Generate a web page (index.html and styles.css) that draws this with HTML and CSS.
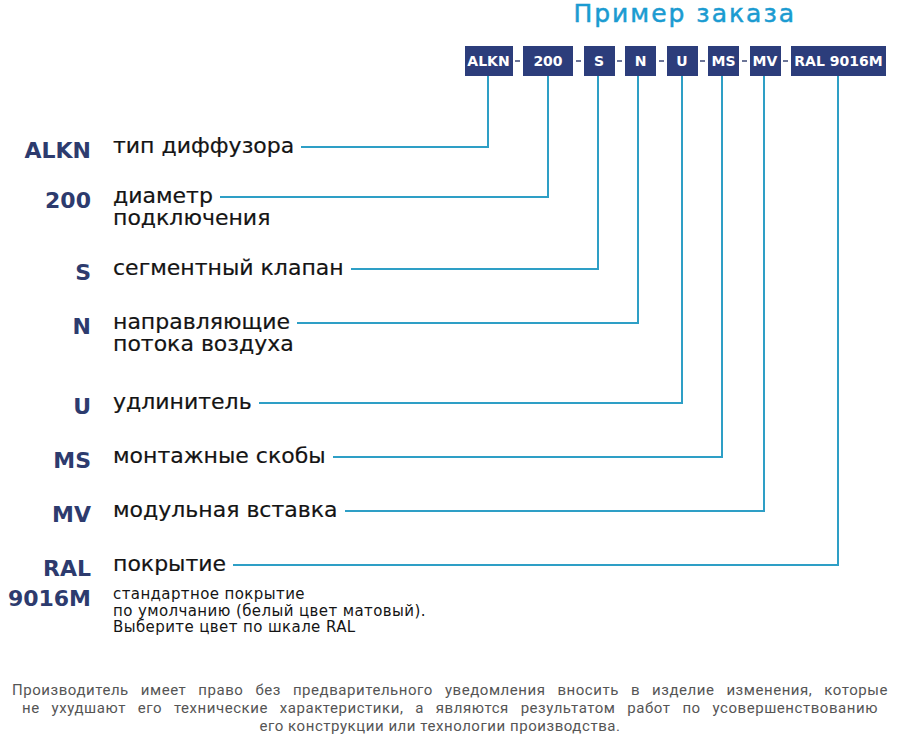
FILE: index.html
```html
<!DOCTYPE html>
<html lang="ru">
<head>
<meta charset="utf-8">
<title>Пример заказа</title>
<link rel="stylesheet" href="styles.css">
</head>
<body>
<div class="page">
  <header class="order">
    <h1 class="title">Пример заказа</h1>
    <div class="codes">
      <span class="code-box w48">ALKN</span><span class="dash"></span>
      <span class="code-box w50">200</span><span class="dash"></span>
      <span class="code-box">S</span><span class="dash"></span>
      <span class="code-box">N</span><span class="dash"></span>
      <span class="code-box">U</span><span class="dash"></span>
      <span class="code-box">MS</span><span class="dash"></span>
      <span class="code-box">MV</span><span class="dash"></span>
      <span class="code-box w95">RAL 9016M</span>
    </div>
  </header>

  <section class="legend">
    <div class="row">
      <div class="key">ALKN</div>
      <div class="desc" style="width:376px">
        <div class="lead"><span>тип диффузора</span><span class="wire"></span></div>
      </div>
    </div>
    <div class="row near">
      <div class="key">200</div>
      <div class="desc" style="width:436px">
        <div class="lead"><span>диаметр</span><span class="wire"></span></div>
        <div class="second">подключения</div>
      </div>
    </div>
    <div class="row near">
      <div class="key">S</div>
      <div class="desc" style="width:486px">
        <div class="lead"><span>сегментный клапан</span><span class="wire"></span></div>
      </div>
    </div>
    <div class="row">
      <div class="key">N</div>
      <div class="desc" style="width:526px">
        <div class="lead"><span>направляющие</span><span class="wire"></span></div>
        <div class="second">потока воздуха</div>
      </div>
    </div>
    <div class="row far">
      <div class="key">U</div>
      <div class="desc" style="width:570px">
        <div class="lead"><span>удлинитель</span><span class="wire"></span></div>
      </div>
    </div>
    <div class="row">
      <div class="key">MS</div>
      <div class="desc" style="width:610px">
        <div class="lead"><span>монтажные скобы</span><span class="wire"></span></div>
      </div>
    </div>
    <div class="row">
      <div class="key">MV</div>
      <div class="desc" style="width:652px">
        <div class="lead"><span>модульная вставка</span><span class="wire"></span></div>
      </div>
    </div>
    <div class="row">
      <div class="key">RAL<br>9016M</div>
      <div class="desc" style="width:726px">
        <div class="lead"><span>покрытие</span><span class="wire"></span></div>
        <div class="note">стандартное покрытие<br>по умолчанию (белый цвет матовый).<br>Выберите цвет по шкале RAL</div>
      </div>
    </div>
  </section>

  <footer class="disclaimer">
    <p class="just">Производитель имеет право без предварительного уведомления вносить в изделие изменения, которые</p>
    <p class="just inset">не ухудшают  его технические  характеристики, а являются результатом работ по усовершенствованию</p>
    <p class="center">его конструкции или технологии производства.</p>
  </footer>

  <svg class="links" width="900" height="744" viewBox="0 0 900 744" aria-hidden="true">
    <g stroke="#2e9fc6" stroke-width="2" fill="none">
      <line x1="488" y1="76" x2="488" y2="148"/>
      <line x1="548" y1="76" x2="548" y2="198"/>
      <line x1="598" y1="76" x2="598" y2="270"/>
      <line x1="638" y1="76" x2="638" y2="324"/>
      <line x1="682" y1="76" x2="682" y2="404"/>
      <line x1="722" y1="76" x2="722" y2="458"/>
      <line x1="764" y1="76" x2="764" y2="512"/>
      <line x1="838" y1="76" x2="838" y2="566"/>
    </g>
  </svg>
</div>
</body>
</html>
```

FILE: styles.css
```css
body {
  margin: 0;
  background: #ffffff;
  font-family: "DejaVu Sans", "Noto Sans", sans-serif;
  color: #141414;
}

.page {
  position: relative;
  width: 900px;
  height: 744px;
  overflow: hidden;
}

.order {
  display: flex;
  flex-direction: column;
  align-items: flex-end;
  padding-right: 14px;
}

.title {
  margin: 0 90px 0 0;
  font-size: 25px;
  line-height: 28px;
  font-weight: normal;
  letter-spacing: 2px;
  color: #1b9bd1;
  -webkit-text-stroke: 0.5px #1b9bd1;
}

.codes {
  display: flex;
  align-items: center;
  height: 30px;
  margin-top: 18px;
}

.code-box {
  display: flex;
  align-items: center;
  justify-content: center;
  width: 31px;
  height: 30px;
  background: #2c3d7b;
  color: #ffffff;
  font-size: 14px;
  font-weight: bold;
  white-space: nowrap;
}

.w48 { width: 48px; }
.w50 { width: 50px; }
.w95 { width: 95px; }

.dash {
  width: 5px;
  height: 2px;
  margin: 0 2.75px;
  background: #6c7597;
}

.legend {
  display: flex;
  flex-direction: column;
  margin-top: 59px;
}

.row {
  display: grid;
  grid-template-columns: 91px auto;
  column-gap: 22px;
  align-items: start;
  margin-top: 32px;
}

.row:first-child { margin-top: 0; }
.row.near { margin-top: 28px; }
.row.far { margin-top: 36px; }

.key {
  padding-top: 1px;
  margin-bottom: -9px;
  text-align: right;
  font-size: 22px;
  line-height: 30px;
  font-weight: bold;
  color: #2d3b6e;
}

.desc {
  font-size: 22px;
  line-height: 22px;
  -webkit-text-stroke: 0.2px #141414;
}

.lead {
  display: flex;
  align-items: flex-start;
}

.lead span:first-child {
  white-space: nowrap;
}

.wire {
  flex: 1;
  height: 2px;
  margin: 11px 0 0 7px;
  background: #2e9fc6;
}

.note {
  margin-top: 11px;
  font-size: 15px;
  line-height: 16.5px;
  letter-spacing: 0.4px;
  -webkit-text-stroke: 0;
}

.disclaimer {
  margin-top: 45px;
  padding: 0 12px;
  font-family: Roboto, "Liberation Sans", sans-serif;
  font-size: 15px;
  line-height: 18px;
  letter-spacing: 0.55px;
  color: #555555;
}

.disclaimer p {
  margin: 0;
}

.just {
  text-align: justify;
  text-align-last: justify;
}

.disclaimer .inset {
  margin: 0 10px;
}

.center {
  text-align: center;
  padding-right: 20px;
}

.links {
  position: absolute;
  left: 0;
  top: 0;
  pointer-events: none;
}
```
